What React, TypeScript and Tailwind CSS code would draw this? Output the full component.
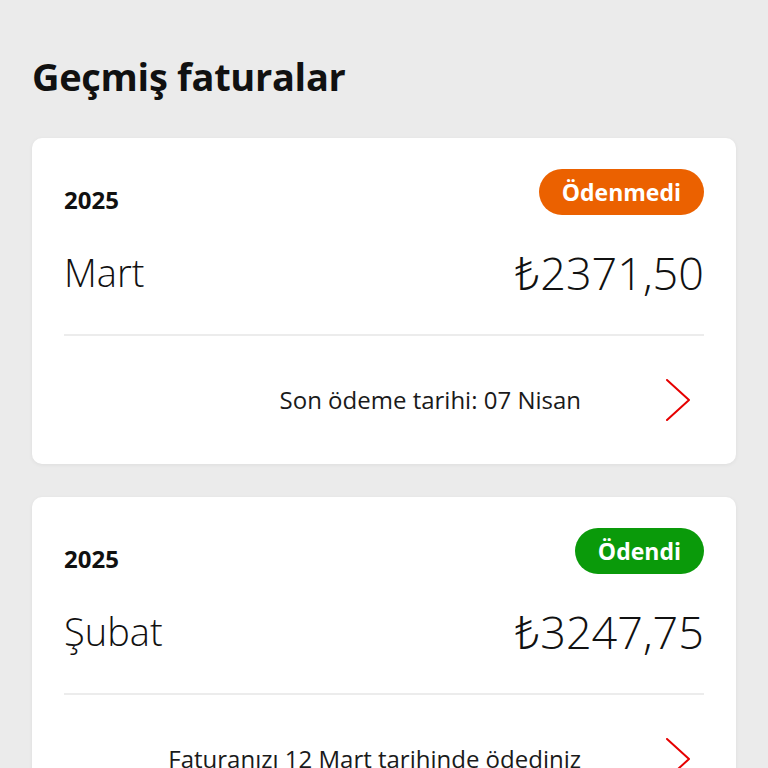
import React from "react";

function Chevron() {
  return (
    <svg width="26" height="42" viewBox="0 0 26 42" fill="none">
      <polyline points="2,1 24,21 2,41" stroke="#e60000" strokeWidth="2" strokeLinecap="round" strokeLinejoin="round" />
    </svg>
  );
}

type Bill = { year: string; month: string; amount: string; status: string; statusColor: string; footer: string };

function Card({ b }: { b: Bill }) {
  return (
    <div className="bg-white rounded-[10px] shadow-[0_1px_4px_rgba(0,0,0,0.06)] px-[32px] pt-[31px]">
      <div className="flex items-center justify-between h-[46px]">
        <span className="text-[24px] font-bold text-[#111] mt-[16px]">{b.year}</span>
        <span className={`h-[46px] rounded-full px-[23px] flex items-center text-white text-[23px] font-bold ${b.statusColor}`}>{b.status}</span>
      </div>
      <div className="flex items-center justify-between h-[50px] mt-[32px]">
        <span className="text-[38px] font-light text-[#111] leading-none">{b.month}</span>
        <span className="text-[45px] font-light text-[#111] leading-none">{b.amount}</span>
      </div>
      <div className="h-[2px] bg-[#ececec] mt-[37px]" />
      <div className="h-[128px] flex items-center justify-end">
        <span className="text-[24px] text-[#1a1a1a]">{b.footer}</span>
        <span className="ml-[84px] mr-[13px] flex items-center"><Chevron /></span>
      </div>
    </div>
  );
}

export default function App() {
  const bills: Bill[] = [
    { year: "2025", month: "Mart", amount: "₺2371,50", status: "Ödenmedi", statusColor: "bg-[#eb6100]", footer: "Son ödeme tarihi: 07 Nisan" },
    { year: "2025", month: "Şubat", amount: "₺3247,75", status: "Ödendi", statusColor: "bg-[#0a9a0a]", footer: "Faturanızı 12 Mart tarihinde ödediniz" },
  ];
  return (
    <div className="min-h-[768px] h-[768px] overflow-hidden bg-[#ebebeb] px-[32px] pt-[50px]" style={{ fontFamily: '"Open Sans", "Noto Sans", sans-serif' }}>
      <h1 className="text-[38px] font-bold text-[#111] leading-[52px] tracking-[-0.3px]">Geçmiş faturalar</h1>
      <div className="mt-[36px] flex flex-col gap-[33px]">
        {bills.map((b, i) => (
          <Card key={i} b={b} />
        ))}
      </div>
    </div>
  );
}
